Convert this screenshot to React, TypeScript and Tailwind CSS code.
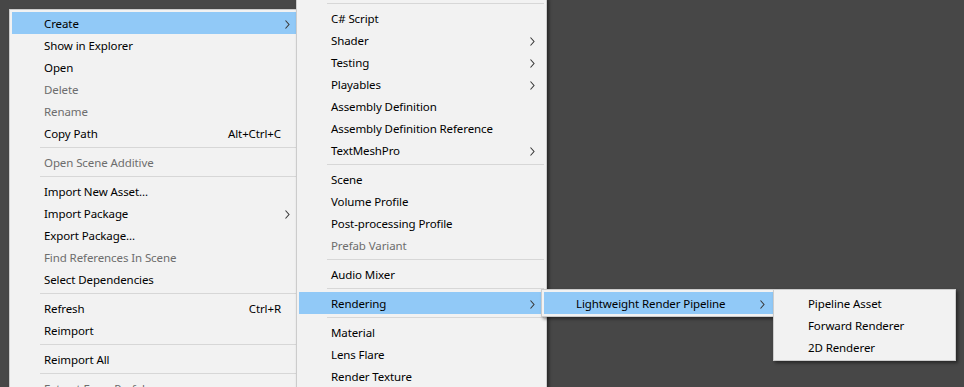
import React from "react";

type Item =
  | { sep: true }
  | { label: string; disabled?: boolean; sub?: boolean; shortcut?: string; active?: boolean };

const assetMenu: Item[] = [
  { label: "Create", sub: true, active: true },
  { label: "Show in Explorer" },
  { label: "Open" },
  { label: "Delete", disabled: true },
  { label: "Rename", disabled: true },
  { label: "Copy Path", shortcut: "Alt+Ctrl+C" },
  { sep: true },
  { label: "Open Scene Additive", disabled: true },
  { sep: true },
  { label: "Import New Asset..." },
  { label: "Import Package", sub: true },
  { label: "Export Package..." },
  { label: "Find References In Scene", disabled: true },
  { label: "Select Dependencies" },
  { sep: true },
  { label: "Refresh", shortcut: "Ctrl+R" },
  { label: "Reimport" },
  { sep: true },
  { label: "Reimport All" },
  { sep: true },
  { label: "Extract From Prefab", disabled: true },
];

// top of this one is scrolled above the window, starts just under "Folder"
const createMenu: Item[] = [
  { sep: true },
  { label: "C# Script" },
  { label: "Shader", sub: true },
  { label: "Testing", sub: true },
  { label: "Playables", sub: true },
  { label: "Assembly Definition" },
  { label: "Assembly Definition Reference" },
  { label: "TextMeshPro", sub: true },
  { sep: true },
  { label: "Scene" },
  { label: "Volume Profile" },
  { label: "Post-processing Profile" },
  { label: "Prefab Variant", disabled: true },
  { sep: true },
  { label: "Audio Mixer" },
  { sep: true },
  { label: "Rendering", sub: true, active: true },
  { sep: true },
  { label: "Material" },
  { label: "Lens Flare" },
  { label: "Render Texture" },
];

const renderingMenu: Item[] = [{ label: "Lightweight Render Pipeline", sub: true, active: true }];

const pipelineMenu: Item[] = [
  { label: "Pipeline Asset" },
  { label: "Forward Renderer" },
  { label: "2D Renderer" },
];

const Chevron = () => (
  <svg width="5" height="9" viewBox="0 0 5 9" className="shrink-0">
    <polyline points="0.5,0.5 4,4.5 0.5,8.5" fill="none" stroke="#3a3a3a" strokeWidth="1.1" />
  </svg>
);

const Menu: React.FC<{ items: Item[]; className: string }> = ({ items, className }) => (
  <div
    className={`absolute border border-[#cccccc] bg-[#f2f2f2] p-[2px] shadow-[2px_2px_3px_rgba(0,0,0,0.45)] ${className}`}
  >
    {items.map((it, i) =>
      "sep" in it ? (
        <div key={i} className="h-[7px] pl-[28px] pt-[3px]">
          <div className="h-px bg-[#d7d7d7]" />
        </div>
      ) : (
        <div
          key={i}
          className={`flex h-[22px] items-center pl-[32px] pr-[9px] pt-[2px] whitespace-nowrap ${
            it.active ? "bg-[#91c9f7]" : ""
          } ${it.disabled ? "text-[#6d6d6d]" : "text-black"}`}
        >
          <span className="flex-1">{it.label}</span>
          {it.shortcut && <span className="mr-[9px]">{it.shortcut}</span>}
          {it.sub && <Chevron />}
        </div>
      )
    )}
  </div>
);

export default function App() {
  return (
    <div
      className="relative h-[387px] w-[964px] overflow-hidden bg-[#474747] text-[11.5px] tracking-[-0.1px]"
      style={{ fontFamily: '"Noto Sans", "Open Sans", sans-serif' }}
    >
      <Menu items={assetMenu} className="left-[9px] top-[9px] w-[293px]" />
      <Menu items={createMenu} className="left-[296px] top-[-3px] w-[251px]" />
      <Menu items={renderingMenu} className="left-[541px] top-[289px] w-[236px]" />
      <Menu items={pipelineMenu} className="left-[773px] top-[289px] w-[183px]" />
    </div>
  );
}
